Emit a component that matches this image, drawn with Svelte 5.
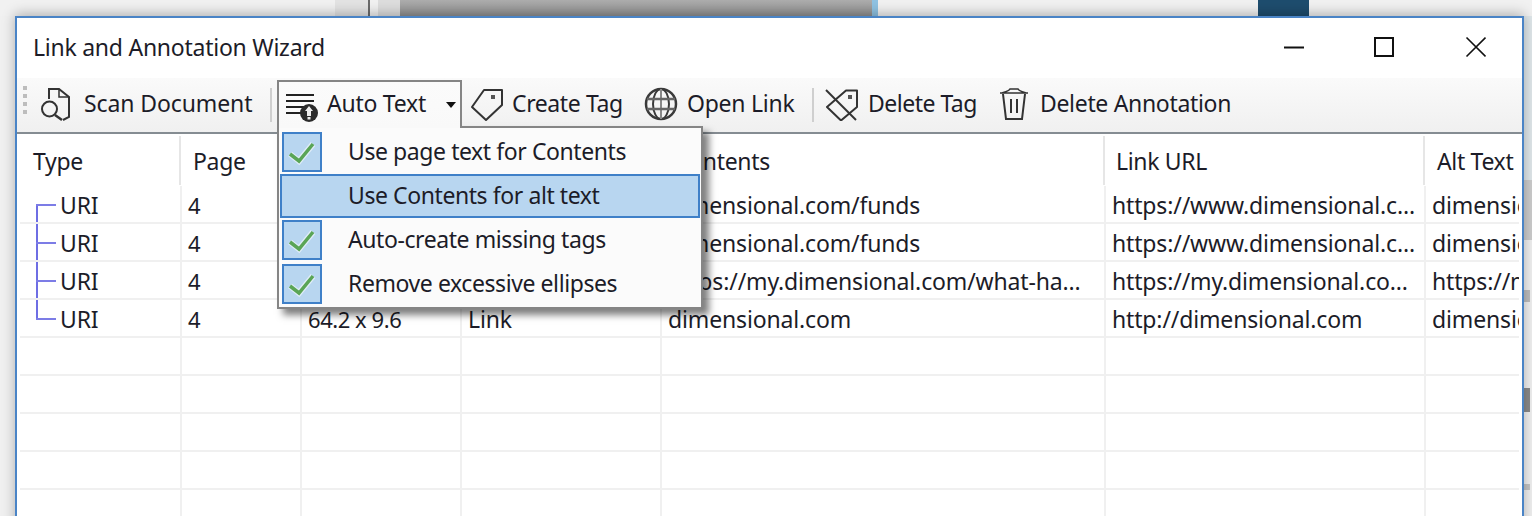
<script>
  const columns = ['Type', 'Page', '', '', 'Contents', 'Link URL', 'Alt Text'];
  const rows = [
    { tree: 'first', page: '4', size: '', kind: '', contents: 'dimensional.com/funds', url: 'https://www.dimensional.c...', alt: 'dimensional.com/funds' },
    { tree: 'mid', page: '4', size: '', kind: '', contents: 'dimensional.com/funds', url: 'https://www.dimensional.c...', alt: 'dimensional.com/funds' },
    { tree: 'mid', page: '4', size: '', kind: '', contents: 'https://my.dimensional.com/what-ha...', url: 'https://my.dimensional.co...', alt: 'https://my.dimensional.com' },
    { tree: 'last', page: '4', size: '64.2 x 9.6', kind: 'Link', contents: 'dimensional.com', url: 'http://dimensional.com', alt: 'dimensional.com' }
  ];
  const empties = [1, 2, 3, 4, 5, 6];
  const menu = [
    { label: 'Use page text for Contents', on: true },
    { label: 'Use Contents for alt text', on: false, hover: true },
    { label: 'Auto-create missing tags', on: true },
    { label: 'Remove excessive ellipses', on: true }
  ];
</script>

<div class="page">
  <div class="backdrop">
    <span class="s1"></span><span class="s2"></span><span class="s3"></span><span class="s4"></span>
    <span class="s5"></span><span class="s6"></span><span class="s7"></span><span class="s8"></span><span class="s9"></span>
  </div>
  <div class="stage">
    <div class="gutter-left"></div>
    <div class="window">
      <div class="titlebar">
        <div class="title">Link and Annotation Wizard</div>
        <svg class="caption" width="202" height="24" viewBox="0 0 202 24" fill="none" stroke="#111" stroke-width="2">
          <path d="M0 12.500H20" />
          <rect x="91" y="3" width="18" height="18" />
          <path d="M182.500 2.500L201.500 21.500M201.500 2.500L182.500 21.500" stroke-width="1.600" />
        </svg>
      </div>

      <div class="toolbar">
        <div class="grip"><i></i><i></i><i></i><i></i></div>

        <svg class="ic scan" width="32" height="36" viewBox="0 0 32 36" fill="none" stroke="#333" stroke-width="2">
          <path d="M8 13V3H18L28 11V31L22 34" />
          <path d="M18 3V11H28" stroke-width="1.500" />
          <circle cx="8.500" cy="23" r="7.500" />
          <path d="M14 29L21 34" stroke-width="2.500" />
        </svg>
        <span class="lbl w-scan">Scan Document</span>
        <i class="sep sep1"></i>

        <div class="dd">
          <div class="ddbtn">
            <svg class="ic auto" width="34" height="34" viewBox="0 0 34 34" fill="none" stroke="#222" stroke-width="2">
              <path d="M1 5H29M1 11H29M1 17H22M1 23H17" />
              <circle cx="24" cy="23" r="9" fill="#2b2b2b" stroke="none" />
              <path d="M24 16L28 21H26V26H22V21H20Z" fill="#eee" stroke="none" />
              <rect x="22.500" y="27" width="3" height="2.500" fill="#eee" stroke="none" />
            </svg>
            <span class="lbl w-auto">Auto Text</span>
            <svg class="caret" width="10" height="6" viewBox="0 0 10 6"><path d="M0 0H10L5 6Z" fill="#111" /></svg>
          </div>
          <div class="menu">
            {#each menu as item}
              <div class="mi" class:hover={item.hover}>
                <span class="chk" class:on={item.on}>
                  {#if item.on}
                    <svg width="36" height="36" viewBox="0 0 36 36" fill="none">
                      <path d="M6 20L15 27L29 10" stroke="#fff" stroke-opacity=".55" stroke-width="6" />
                      <path d="M6 20L15 27L29 10" stroke="#5aa556" stroke-width="3.500" />
                    </svg>
                  {/if}
                </span>
                <span class="mtext">{item.label}</span>
              </div>
            {/each}
          </div>
        </div>

        <svg class="ic tag" width="34" height="34" viewBox="0 0 34 34" fill="none" stroke="#333" stroke-width="2">
          <path d="M14 3H32V18L16 33L2 20Z" stroke-linejoin="round" />
          <rect x="21" y="8" width="4" height="4" fill="#555" stroke="none" />
        </svg>
        <span class="lbl w-tag">Create Tag</span>

        <svg class="ic globe" width="34" height="34" viewBox="0 0 34 34" fill="none" stroke="#3a3a3a" stroke-width="2">
          <circle cx="17" cy="17" r="15" stroke-width="2.500" />
          <ellipse cx="17" cy="17" rx="8" ry="15" />
          <path d="M17 2V32" stroke="#888" />
          <path d="M3 12H31M3 22H31" stroke-width="2.500" stroke="#666" />
        </svg>
        <span class="lbl w-link">Open Link</span>
        <i class="sep sep2"></i>

        <svg class="ic deltag" width="34" height="34" viewBox="0 0 34 34" fill="none" stroke="#333" stroke-width="2">
          <path d="M21 3.500H32V20L16 33.500L2 20Z" stroke-linejoin="round" />
          <path d="M1 3L31 33" />
          <rect x="23" y="8" width="4" height="4" fill="#555" stroke="none" />
        </svg>
        <span class="lbl w-del">Delete Tag</span>

        <svg class="ic trash" width="32" height="34" viewBox="0 0 32 34" fill="none" stroke="#333" stroke-width="2">
          <path d="M2 7H30M4 7C7 6 11 5 12 3H20C21 5 25 6 28 7" stroke-width="1.600" />
          <path d="M5 8L8 33H24L27 8" />
          <path d="M13 13V27M19 13V27" />
        </svg>
        <span class="lbl w-ann">Delete Annotation</span>
      </div>

      <div class="table">
        <div class="row head">
          {#each columns as c}
            <div class="th">{c}</div>
          {/each}
        </div>
        {#each rows as r}
          <div class="row">
            <div class="td type"><i class="tree {r.tree}"></i>URI</div>
            <div class="td n">{r.page}</div>
            <div class="td n">{r.size}</div>
            <div class="td">{r.kind}</div>
            <div class="td">{r.contents}</div>
            <div class="td">{r.url}</div>
            <div class="td">{r.alt}</div>
          </div>
        {/each}
        {#each empties as e}
          <div class="row">
            {#each columns as c}
              <div class="td"></div>
            {/each}
          </div>
        {/each}
      </div>
    </div>
    <div class="gutter-right">
      <span class="g1"></span>
      <span class="g2"></span>
      <span class="g3"></span>
      <span class="g4"></span>
      <span class="g5"></span>
    </div>
  </div>
</div>

<style>
  :global(body) {
    margin: 0;
    background: #f0f0f0;
    overflow: hidden;
  }
  .page {
    width: 1532px;
    height: 516px;
    overflow: hidden;
    font-family: "Noto Sans", "Open Sans", sans-serif;
    color: #1c1c28;
  }
  .backdrop {
    display: flex;
    height: 16px;
  }
  .backdrop span { display: block; height: 16px; }
  .s1 { width: 335px; background: #f1f1f1; }
  .s2 { width: 33px; background: #e3e3e3; }
  .s3 { width: 2px; background: #6a6a6a; }
  .s4 { width: 8px; background: #f1f1f1; }
  .s5 { width: 22px; background: #dddddd; }
  .s6 { width: 472px; background: linear-gradient(#adadad, #8f8f8f); }
  .s7 { width: 6px; background: #8fc2e2; }
  .s8 { width: 380px; background: #f1f1f1; }
  .s9 { width: 51px; background: #1e4d6e; }
  .backdrop::after {
    content: "";
    flex: 1;
    background: #f1f1f1;
  }
  .stage {
    display: flex;
    height: 500px;
  }
  .gutter-left { width: 15px; flex: none; }
  .window {
    width: 1505px;
    flex: none;
    height: 520px;
    border: 2px solid #4a84c6;
    background: #fff;
    box-shadow: 0 -2px 12px rgba(0, 0, 0, .28);
    position: relative;
    z-index: 1;
  }
  .titlebar {
    height: 60px;
    display: flex;
    align-items: center;
    position: relative;
  }
  .title {
    margin-left: 16px;
    font-size: 23px;
    letter-spacing: -.25px;
    white-space: nowrap;
    position: relative;
    top: -1px;
  }
  .caption {
    margin-left: auto;
    margin-right: 36px;
    position: relative;
    top: -1px;
  }

  .toolbar {
    height: 56px;
    box-sizing: border-box;
    display: flex;
    align-items: center;
    background: linear-gradient(#fafafa, #f0f0f0);
    border-bottom: 2px solid #858c92;
    position: relative;
    z-index: 5;
  }
  .grip {
    display: flex;
    flex-direction: column;
    gap: 4px;
    margin-left: 6px;
    margin-top: -10px;
  }
  .grip i { display: block; width: 4px; height: 4px; background: #bdbdbd; }
  .ic { flex: none; }
  .lbl {
    display: block;
    font-size: 23px;
    letter-spacing: -.25px;
    white-space: nowrap;
    flex: none;
    line-height: 30px;
    margin-top: -5px;
  }
  .sep { display: block; width: 2px; height: 34px; background: #cfcfcf; flex: none; }

  .scan { margin-left: 14px; margin-top: -2px; }
  .w-scan { width: 168px; margin-left: 11px; letter-spacing: -.1px; }
  .sep1 { margin-left: 18px; }

  .dd { position: relative; margin-left: 5px; width: 185px; height: 48px; flex: none; align-self: flex-start; margin-top: 2px; }
  .ddbtn {
    position: relative;
    z-index: 3;
    box-sizing: border-box;
    height: 48px;
    border: 2px solid #858585;
    border-bottom: none;
    background: linear-gradient(#fbfbfb, #f9f9f9);
    display: flex;
    align-items: center;
    padding-left: 6px;
  }
  .w-auto { width: 99px; margin-left: 8px; }
  .auto { margin-top: 4px; }
  .caret { margin-left: 20px; flex: none; }
  .menu {
    position: absolute;
    z-index: 2;
    left: 0;
    top: 46px;
    width: 426px;
    box-sizing: border-box;
    height: 183px;
    padding: 4px 3px 5px;
    background: #fbfbfb;
    border: 2px solid #858585;
    box-shadow: 6px 6px 7px rgba(0, 0, 0, .5);
  }
  .mi {
    display: flex;
    align-items: center;
    height: 40px;
    margin-bottom: 4px;
  }
  .mi.hover {
    height: 44px;
    box-sizing: border-box;
    margin: -2px -2px 2px;
    padding-left: 2px;
    border: 2px solid #3f80c8;
    background: #b8d6f0;
  }
  .mi.hover .chk { margin-left: -2px; }
  .chk {
    display: block;
    box-sizing: border-box;
    width: 40px;
    height: 40px;
    flex: none;
  }
  .chk.on {
    background: #b8d6f0;
    border: 2px solid #3f80c8;
  }
  .chk svg { display: block; }
  .mtext {
    margin-left: 26px;
    font-size: 23px;
    letter-spacing: -.42px;
    white-space: nowrap;
    position: relative;
    top: -1px;
  }

  .tag { margin-left: 8px; margin-top: -2px; }
  .w-tag { width: 111px; margin-left: 8px; letter-spacing: -.4px; }
  .globe { margin-left: 21px; margin-top: -2px; }
  .w-link { width: 107px; margin-left: 9px; }
  .sep2 { margin-left: 18px; }
  .deltag { margin-left: 11px; margin-top: -2px; }
  .w-del { width: 109px; margin-left: 9px; letter-spacing: -.5px; }
  .trash { margin-left: 21px; margin-top: -4px; }
  .w-ann { width: 190px; margin-left: 10px; letter-spacing: -.32px; }

  .table {
    margin-left: 3px;
    width: 1499px;
  }
  .row {
    display: grid;
    grid-template-columns: 162px 120px 160px 200px 444px 320px 93px;
    height: 38px;
  }
  .row.head { height: 52px; }
  .th {
    font-size: 23px;
    letter-spacing: -.33px;
    line-height: 54px;
    padding-left: 13px;
    box-sizing: border-box;
    position: relative;
    white-space: nowrap;
    height: 52px;
  }
  .th::after {
    content: "";
    position: absolute;
    right: 1px;
    top: 2px;
    bottom: 1px;
    width: 2px;
    background: #e6e6e6;
  }
  .th:last-child::after { display: none; }
  .th:nth-child(2) { padding-left: 11px; }
  .th:nth-child(6) { padding-left: 10px; }
  .th:nth-child(7) { padding-left: 11px; overflow: hidden; }
  .td {
    box-sizing: border-box;
    font-size: 23px;
    letter-spacing: -.15px;
    line-height: 38px;
    padding-left: 6px;
    border-right: 2px solid #f0f0f0;
    border-bottom: 2px solid #f0f0f0;
    white-space: nowrap;
    overflow: hidden;
    position: relative;
  }
  .td.n { font-size: 22px; letter-spacing: -.45px; }
  .td:last-child { border-right: none; }
  .td.type { padding-left: 40px; }
  .tree {
    position: absolute;
    left: 16px;
    width: 20px;
    top: -2px;
    height: 40px;
  }
  .tree::before {
    content: "";
    position: absolute;
    left: 0;
    width: 2px;
    background: #6e6ee4;
    top: 0;
    bottom: 0;
  }
  .tree::after {
    content: "";
    position: absolute;
    left: 0;
    width: 20px;
    height: 2px;
    background: #7c7ce6;
    top: 20px;
  }
  .tree.first::before { top: 20px; }
  .tree.last::before { bottom: 18px; }

  .gutter-right {
    flex: 1;
    display: flex;
    flex-direction: column;
    min-width: 0;
    position: relative;
    z-index: 0;
  }
  .gutter-right span { display: block; flex: none; }
  .g1 { height: 164px; background: #dfe7ea; }
  .g2 { height: 60px; background: #cccccc; }
  .g3 { height: 12px; width: 6px; margin-top: 50px; background: #bdbdbd; }
  .g4 { height: 24px; width: 6px; margin-top: 86px; background: #8a8a8a; }
  .g5 { height: 6px; width: 6px; margin-top: 72px; background: #c4c4c4; }
</style>
